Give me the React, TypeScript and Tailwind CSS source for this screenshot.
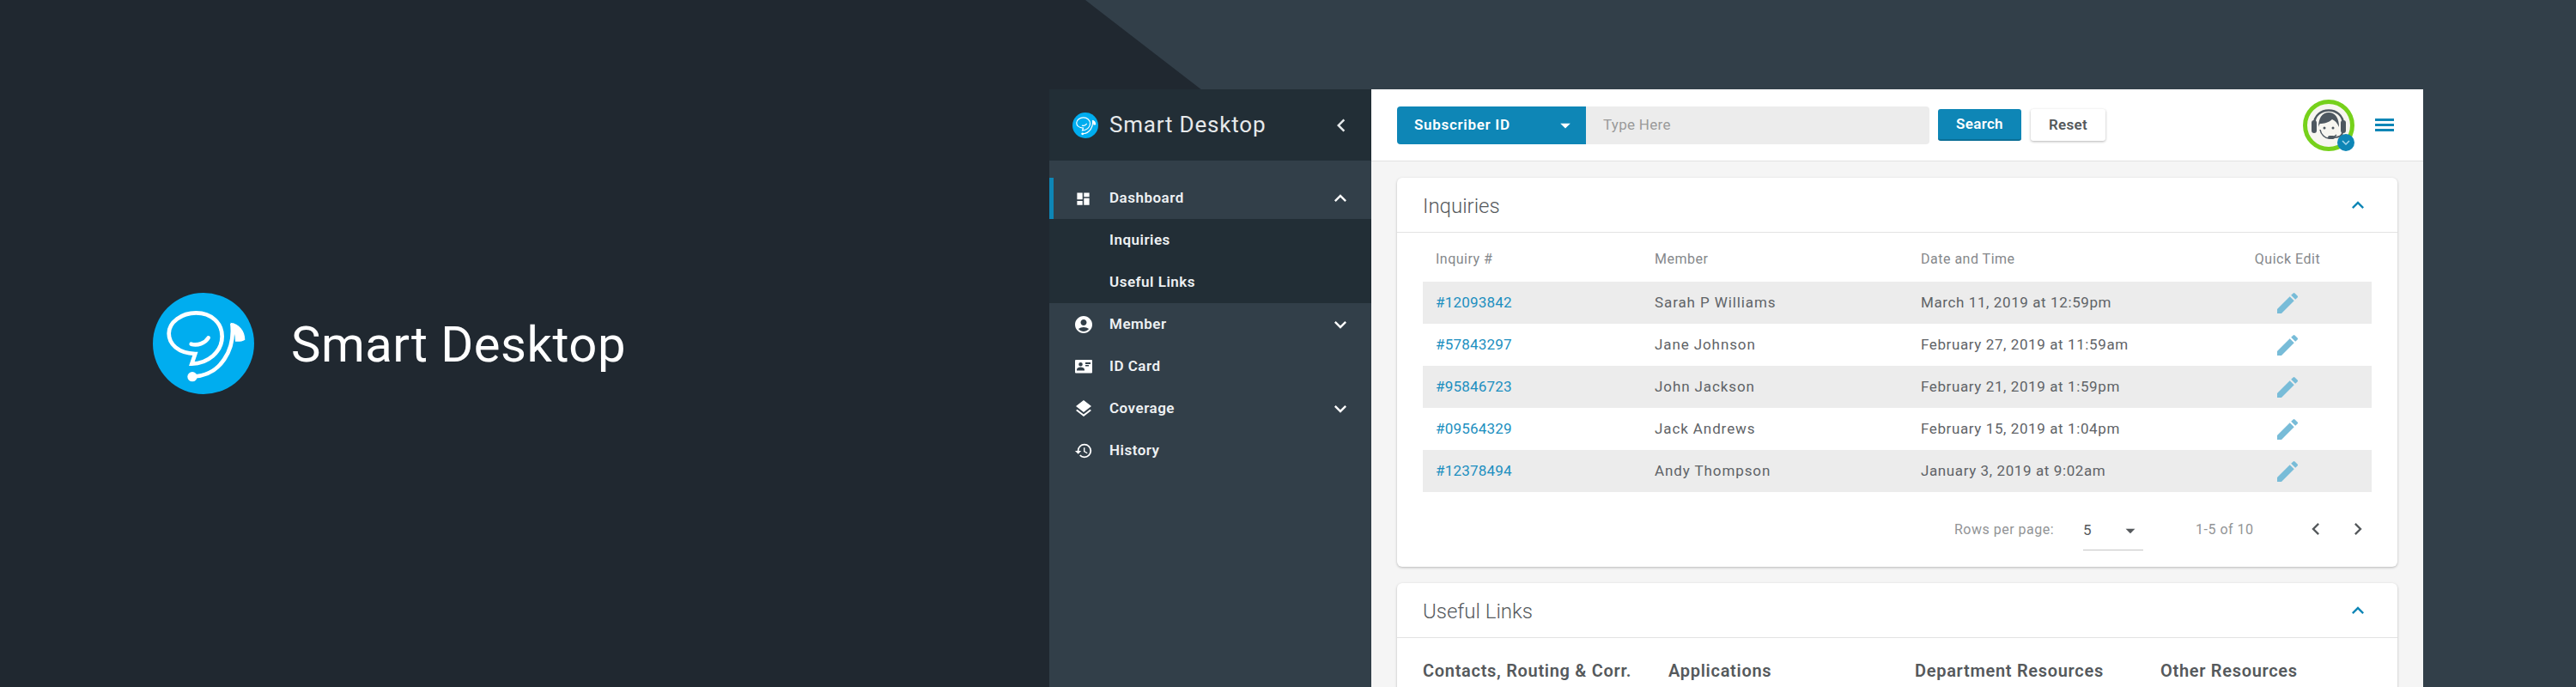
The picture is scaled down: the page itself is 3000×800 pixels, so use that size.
import {
  MdAccountCircle,
  MdArrowDropDown,
  MdChevronLeft,
  MdChevronRight,
  MdDashboard,
  MdEdit,
  MdHistory,
  MdKeyboardArrowDown,
  MdKeyboardArrowUp,
  MdLayers,
} from "react-icons/md";

const inquiries = [
  { id: "#12093842", member: "Sarah P Williams", date: "March 11, 2019 at 12:59pm" },
  { id: "#57843297", member: "Jane Johnson", date: "February 27, 2019 at 11:59am" },
  { id: "#95846723", member: "John Jackson", date: "February 21, 2019 at 1:59pm" },
  { id: "#09564329", member: "Jack Andrews", date: "February 15, 2019 at 1:04pm" },
  { id: "#12378494", member: "Andy Thompson", date: "January 3, 2019 at 9:02am" },
];

const linkColumns = ["Contacts, Routing & Corr.", "Applications", "Department Resources", "Other Resources"];

function Logo({ className }: { className: string }) {
  return (
    <svg viewBox="24 33 354 354" className={className}>
      <circle cx="201" cy="210" r="177" fill="#00adef" />
      <g fill="none" stroke="#fff" strokeWidth="14">
        <path d="M172 246C112 244 80 212 80 175C80 135 125 103 175 103C230 103 266 140 266 185C266 240 215 280 160 281L172 246Z" />
        <path d="M158 212C180 218 206 210 218 190" strokeLinecap="round" />
        <path d="M301 140C312 230 262 322 165 325" />
      </g>
      <circle cx="162" cy="326" r="17" fill="#fff" />
      <path d="M295 137C325 140 346 165 346 197C336 203 325 204 312 203C312 180 306 158 295 137Z" fill="#fff" />
    </svg>
  );
}

function IdCardIcon() {
  return (
    <svg viewBox="0 0 20 16" className="w-[20px] h-[16px]">
      <path
        fillRule="evenodd"
        fill="#fff"
        d="M1 0H19A1 1 0 0 1 20 1V14.5A1 1 0 0 1 19 15.500H1A1 1 0 0 1 0 14.500V1A1 1 0 0 1 1 0ZM6.500 3A2.300 2.300 0 1 0 6.500 7.600A2.300 2.300 0 0 0 6.500 3ZM2 12.500H11V11.500C11 9.500 8.500 8.600 6.500 8.600C4.500 8.600 2 9.500 2 11.500ZM12 3V5H18V3ZM12 6V7.500H16V6Z"
      />
    </svg>
  );
}

function Agent() {
  return (
    <div className="relative w-[60px] h-[60px]">
      <svg viewBox="0 0 60 60" className="w-[60px] h-[60px]">
        <circle cx="30" cy="30" r="27.500" fill="#f7f6f0" stroke="#76d11b" strokeWidth="5" />
        <path d="M13 29C13 7 47 7 47 29" fill="none" stroke="#4e5860" strokeWidth="2.500" />
        <rect x="10" y="24" width="6" height="15" rx="3" fill="#4e5860" />
        <rect x="44" y="24" width="6" height="15" rx="3" fill="#4e5860" />
        <path d="M18 32C18 22 22 15 30 15C38 15 42 22 42 32C40 27 37 24 34 23C30 27 24 28 20 28C19 29 18.500 30 18 32Z" fill="#4e5860" />
        <circle cx="25" cy="33" r="1.500" fill="#4e5860" />
        <circle cx="35" cy="33" r="1.500" fill="#4e5860" />
        <path d="M20 35C21 41 26 45 30 45C34 45 37 43 39 41" fill="none" stroke="#4e5860" strokeWidth="1.500" />
        <path d="M46 38C46 42 42 44 36 44" fill="none" stroke="#4e5860" strokeWidth="2" />
        <rect x="29" y="42" width="8" height="4" rx="2" fill="#4e5860" />
      </svg>
      <div className="absolute right-0 bottom-0 w-[20px] h-[20px] rounded-full bg-[#0e86b6] flex items-center justify-center">
        <MdKeyboardArrowDown className="text-[#a8d8ec] text-[18px]" />
      </div>
    </div>
  );
}

function NavRow({
  icon,
  label,
  chevron,
  active,
}: {
  icon?: React.ReactNode;
  label: string;
  chevron?: "up" | "down";
  active?: boolean;
}) {
  return (
    <div
      className={`flex items-center pl-[22px] pr-[22px] border-l-[5px] ${
        active ? "h-[48px] border-[#0e86b6]" : "h-[49px] border-transparent"
      }`}
    >
      <div className="w-[42px] flex justify-center -ml-[2px] mr-[3px] pr-[13px]">{icon}</div>
      <span className="flex-1 text-[17px] font-semibold text-[#eef1f3] tracking-[0.5px]">{label}</span>
      {chevron === "up" && <MdKeyboardArrowUp className="text-white text-[28px]" />}
      {chevron === "down" && <MdKeyboardArrowDown className="text-white text-[28px]" />}
    </div>
  );
}

function Sidebar() {
  return (
    <aside className="w-[375px] h-full bg-[#323f49] flex flex-col shrink-0">
      <div className="h-[83px] shrink-0 bg-[#222e36] flex items-center pl-[27px] pr-[20px]">
        <Logo className="w-[30px] h-[30px]" />
        <span className="ml-[13px] flex-1 text-[26px] text-[#e6e9eb] tracking-[0.8px]">Smart Desktop</span>
        <MdChevronLeft className="text-[#e6e9eb] text-[30px]" />
      </div>
      <div className="pt-[20px]">
        <NavRow active chevron="up" label="Dashboard" icon={<MdDashboard className="text-white text-[19px]" />} />
        <div className="bg-[#222e36]">
          <NavRow label="Inquiries" />
          <NavRow label="Useful Links" />
        </div>
        <NavRow chevron="down" label="Member" icon={<MdAccountCircle className="text-white text-[24px]" />} />
        <NavRow label="ID Card" icon={<IdCardIcon />} />
        <NavRow chevron="down" label="Coverage" icon={<MdLayers className="text-white text-[24px]" />} />
        <NavRow label="History" icon={<MdHistory className="text-white text-[22px]" />} />
      </div>
    </aside>
  );
}

function Topbar() {
  return (
    <div className="h-[84px] shrink-0 bg-white border-b border-[#e2e2e2] flex items-center pl-[30px] pr-[34px]">
      <div className="w-[220px] h-[44px] bg-[#0e86b6] rounded-l-[4px] flex items-center pl-[20px] pr-[10px]">
        <span className="flex-1 text-[17px] font-semibold text-white tracking-[0.7px]">Subscriber ID</span>
        <MdArrowDropDown className="text-white text-[28px]" />
      </div>
      <div className="w-[400px] h-[44px] bg-[#ececec] rounded-r-[4px] flex items-center pl-[20px] text-[17px] tracking-[0.3px] text-[#9a9a9a]">
        Type Here
      </div>
      <button className="ml-[10px] w-[97px] h-[37px] bg-[#0e86b6] border-b-[2px] border-[#0b6f97] rounded-[3px] text-[17px] tracking-[0.3px] font-semibold text-white">
        Search
      </button>
      <button className="ml-[11px] w-[87px] h-[37px] bg-white rounded-[3px] shadow-[0_1px_3px_rgba(0,0,0,0.3)] text-[17px] tracking-[0.3px] font-semibold text-[#55595c]">
        Reset
      </button>
      <div className="ml-auto flex items-center gap-[24px]">
        <Agent />
        <div className="w-[22px] flex flex-col gap-[3px]">
          <div className="h-[3px] bg-[#0e86b6]" />
          <div className="h-[3px] bg-[#0e86b6]" />
          <div className="h-[3px] bg-[#0e86b6]" />
        </div>
      </div>
    </div>
  );
}

function CardHeader({ title }: { title: string }) {
  return (
    <div className="h-[64px] border-b border-[#e2e2e2] flex items-center pl-[30px] pr-[32px]">
      <span className="flex-1 pt-[2px] text-[24px] font-light text-[#55595c]">{title}</span>
      <MdKeyboardArrowUp className="text-[#0e86b6] text-[28px]" />
    </div>
  );
}

function InquiriesCard() {
  return (
    <section className="h-[453px] bg-white rounded-[6px] shadow-[0_1px_3px_rgba(0,0,0,0.25)]">
      <CardHeader title="Inquiries" />
      <div className="px-[30px]">
        <div className="h-[57px] pt-[4px] grid grid-cols-[270px_310px_370px_114px] items-center text-[16px] text-[#85888b] tracking-[0.5px]">
          <span className="pl-[15px]">Inquiry #</span>
          <span>Member</span>
          <span>Date and Time</span>
          <span className="text-center">Quick Edit</span>
        </div>
        {inquiries.map((row, i) => (
          <div
            key={row.id}
            className={`h-[49px] grid grid-cols-[270px_310px_370px_114px] items-center text-[17px] text-[#5f6367] ${
              i % 2 === 0 ? "bg-[#ececec]" : ""
            }`}
          >
            <span className="pl-[15px] text-[#1c8fc0] tracking-[0.2px]">{row.id}</span>
            <span className="tracking-[0.9px]">{row.member}</span>
            <span className="tracking-[0.6px]">{row.date}</span>
            <span className="flex justify-center">
              <MdEdit className="text-[#78bcd8] text-[32px]" />
            </span>
          </div>
        ))}
        <div className="h-[88px] flex items-center text-[16px] text-[#929496] whitespace-nowrap">
          <span className="ml-[619px] w-[118px] shrink-0 tracking-[0.5px]">Rows per page:</span>
          <div className="ml-[32px] w-[70px] shrink-0 h-[46px] mt-[2px] border-b border-[#c4c4c4] flex items-center justify-between pr-[2px] text-[#55595c] text-[17px]">
            <span>5</span>
            <MdArrowDropDown className="text-[#55595c] text-[26px]" />
          </div>
          <span className="ml-[61px] w-[66px] shrink-0 tracking-[0.5px]">1-5 of 10</span>
          <MdChevronLeft className="ml-[60px] shrink-0 text-[#55595c] text-[28px] -mt-[3px]" />
          <MdChevronRight className="ml-[21px] shrink-0 text-[#55595c] text-[28px] -mt-[3px]" />
        </div>
      </div>
    </section>
  );
}

function LinksCard() {
  return (
    <section className="mt-[19px] bg-white rounded-[6px] shadow-[0_1px_3px_rgba(0,0,0,0.25)]">
      <CardHeader title="Useful Links" />
      <div className="px-[30px] pt-[23px] pb-[40px] grid grid-cols-[286px_287px_286px_1fr] text-[20px] font-semibold text-[#55595c] tracking-[0.7px]">
        {linkColumns.map((heading) => (
          <span key={heading}>{heading}</span>
        ))}
      </div>
    </section>
  );
}

export default function App() {
  return (
    <div className="relative w-[3000px] h-[800px] overflow-hidden bg-[#202830] font-[Roboto,sans-serif] flex">
      {/* diagonal background shape behind the app window */}
      <div className="absolute inset-0 bg-[#323f49] [clip-path:polygon(1264px_0,3000px_0,3000px_800px,2300px_800px)]" />
      <div className="relative w-[1222px] shrink-0 h-full flex items-center pl-[178px]">
        <Logo className="w-[118px] h-[118px]" />
        <span className="ml-[43px] pt-[2px] text-[58px] text-white tracking-[0.5px]">Smart Desktop</span>
      </div>
      <div className="relative mt-[104px] w-[1600px] h-[696px] flex overflow-hidden">
        <Sidebar />
        <main className="w-[1225px] h-full bg-[#f5f5f5] flex flex-col">
          <Topbar />
          <div className="px-[30px] pt-[19px]">
            <InquiriesCard />
            <LinksCard />
          </div>
        </main>
      </div>
    </div>
  );
}
